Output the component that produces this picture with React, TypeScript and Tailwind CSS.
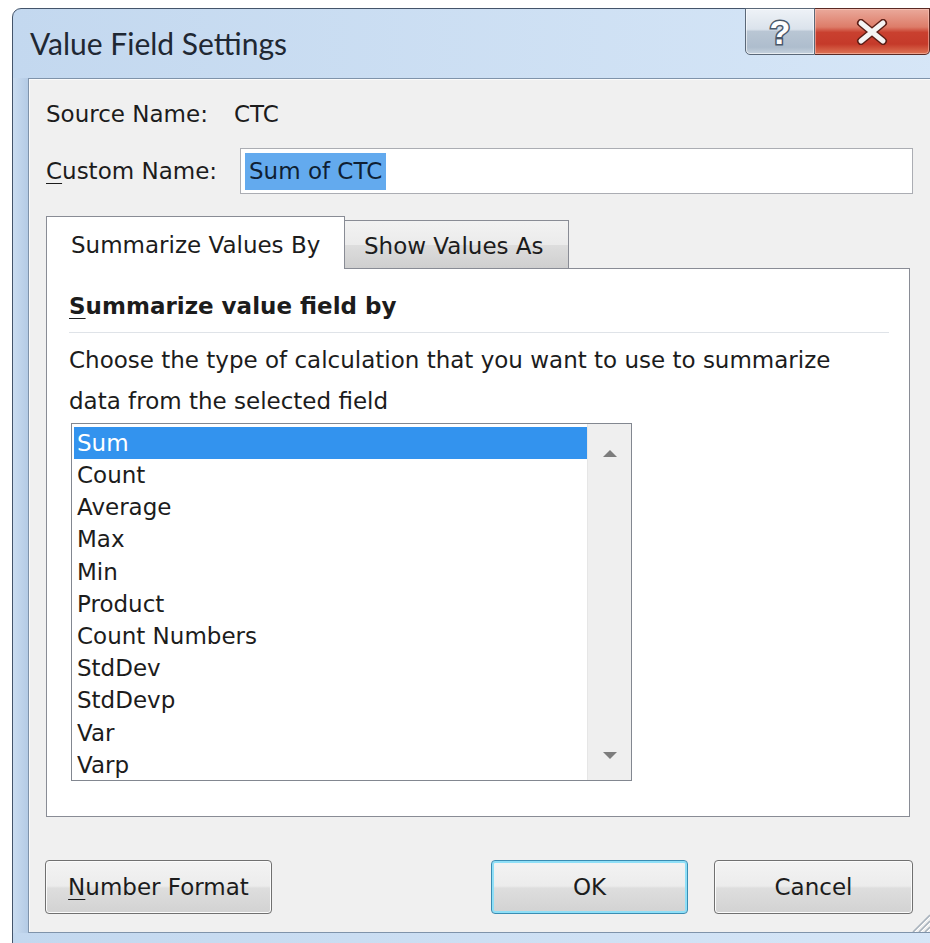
const functions = [
  "Sum",
  "Count",
  "Average",
  "Max",
  "Min",
  "Product",
  "Count Numbers",
  "StdDev",
  "StdDevp",
  "Var",
  "Varp",
];

function HelpButton() {
  return (
    <div className="w-[70px] h-[47px] -mt-px border border-[#5b6878] rounded-bl-[5px] bg-[linear-gradient(to_bottom,#eef2f7_0%,#dbe3ec_45%,#b9c6d4_50%,#aebdcd_85%,#c7d3df_100%)] flex items-center justify-center shadow-[inset_0_0_0_1px_rgba(255,255,255,0.6)]">
      <span className="font-['Liberation_Sans',sans-serif] font-bold text-[34px] leading-none text-white [-webkit-text-stroke:3px_#4a586a] [paint-order:stroke_fill]">
        ?
      </span>
    </div>
  );
}

function CloseButton() {
  return (
    <div className="w-[115px] h-[47px] -mt-px border border-l-0 border-[#5a2a24] rounded-br-[5px] bg-[linear-gradient(to_bottom,#eaa99b_0%,#dd7c69_40%,#c9402f_52%,#c53a2a_78%,#de7556_100%)] flex items-center justify-center shadow-[inset_0_0_0_1px_rgba(255,210,200,0.5)]">
      <svg width="36" height="26" viewBox="0 0 36 26">
        <path d="M7 4 L29 22 M29 4 L7 22" stroke="#5b1e16" strokeWidth="8" strokeLinecap="round" />
        <path d="M7 4 L29 22 M29 4 L7 22" stroke="#f4f4f4" strokeWidth="5" strokeLinecap="round" />
      </svg>
    </div>
  );
}

function PushButton({ children, width, isDefault }: { children: React.ReactNode; width: string; isDefault?: boolean }) {
  return (
    <div
      className={`${width} h-[54px] rounded-[4px] flex items-center justify-center bg-[linear-gradient(to_bottom,#f3f3f3_0%,#ececec_48%,#dedede_52%,#d2d2d2_100%)] ${
        isDefault
          ? "border border-[#3a8db3] shadow-[inset_0_0_0_2px_#8fdff7]"
          : "border border-[#707070] shadow-[inset_0_0_0_1px_#fbfbfb]"
      }`}
    >
      {children}
    </div>
  );
}

function ScrollArrow({ up }: { up?: boolean }) {
  return (
    <svg width="16" height="9" viewBox="0 0 16 9">
      <path d={up ? "M1 8 L8 1 L15 8 Z" : "M1 1 L8 8 L15 1 Z"} fill="#7d7d7d" />
    </svg>
  );
}

export default function App() {
  return (
    <div className="w-[930px] h-[943px] overflow-hidden bg-white font-['DejaVu_Sans',sans-serif] text-[23px] text-[#1c1c1c]">
      <div className="ml-[12px] mt-[8px] w-[935px] h-[960px] rounded-tl-[9px] border border-[#44546a] bg-[linear-gradient(to_right,#c3d8ef,#d6e6f7)] flex flex-col">
        {/* caption */}
        <div className="h-[69px] flex justify-between pl-[17px] pr-[16px]">
          <span className="self-center font-['Lato',sans-serif] text-[30px] text-[#1f2833]">Value Field Settings</span>
          <div className="flex self-start">
            <HelpButton />
            <CloseButton />
          </div>
        </div>

        <div className="flex">
          <div className="w-[15px] bg-[linear-gradient(to_right,#cadcf0,#b4cbe5)]" />
          <div className="relative flex-1 h-[855px] border-t border-l border-b border-[#7f93aa] bg-[#f0f0f0] pt-[19px] pl-[17px] shadow-[inset_1px_1px_0_#fbfbfb]">
            <div className="h-[32px] flex items-center">
              <span className="w-[188px]">Source Name:</span>
              <span>CTC</span>
            </div>

            <div className="mt-[18px] h-[46px] flex items-center">
              <span className="w-[194px]">
                <span className="underline underline-offset-[4px] decoration-1">C</span>ustom Name:
              </span>
              <div className="w-[673px] h-[46px] border border-[#abadb3] bg-white flex items-center pl-[4px]">
                <span className="h-[37px] px-[4px] flex items-center bg-[#63aaee] text-[#0f1f33]">Sum of CTC</span>
              </div>
            </div>

            {/* tabs */}
            <div className="mt-[22px] h-[52px] flex items-end">
              <div className="relative z-10 -mb-px w-[299px] h-[53px] bg-white border-t border-l border-r border-[#898c95] pl-[24px] pt-[5px] flex items-center">
                Summarize Values By
              </div>
              <div className="w-[224px] h-[48px] border-t border-r border-[#898c95] bg-[linear-gradient(to_bottom,#f2f2f2_0%,#ebebeb_50%,#dddddd_52%,#cfcfcf_100%)] pl-[19px] pt-[4px] flex items-center">
                Show Values As
              </div>
            </div>

            <div className="w-[864px] h-[549px] border border-[#898c95] bg-white pl-[22px] pr-[20px] pt-[21px]">
              <div className="h-[32px] flex items-center font-bold">
                <span className="underline underline-offset-[4px] decoration-1">S</span>ummarize value field by
              </div>
              <div className="mt-[10px] h-px bg-[#dfe3e8]" />
              <div className="mt-[7px] leading-[41px]">
                <div>Choose the type of calculation that you want to use to summarize</div>
                <div>data from the selected field</div>
              </div>

              <div className="mt-px ml-[2px] w-[561px] h-[358px] border border-[#828790] bg-white flex">
                <div className="flex-1 pl-[2px] pt-[3px]">
                  {functions.map((name, i) => (
                    <div
                      key={name}
                      className={`h-[32.2px] pl-[3px] flex items-center ${i === 0 ? "bg-[#3393ee] text-white" : ""}`}
                    >
                      {name}
                    </div>
                  ))}
                </div>
                <div className="w-[44px] bg-[#efefef] border-l border-[#e6e6e6] flex flex-col items-center justify-between pt-[25px] pb-[20px]">
                  <ScrollArrow up />
                  <ScrollArrow />
                </div>
              </div>
            </div>

            {/* dialog buttons */}
            <div className="mt-[43px] -ml-px flex">
              <PushButton width="w-[227px]">
                <span>
                  <span className="underline underline-offset-[4px] decoration-1">N</span>umber Format
                </span>
              </PushButton>
              <div className="ml-[219px]">
                <PushButton width="w-[197px]" isDefault>
                  OK
                </PushButton>
              </div>
              <div className="ml-[26px]">
                <PushButton width="w-[199px]">Cancel</PushButton>
              </div>
            </div>

            {/* size grip */}
            <svg className="absolute right-0 bottom-0" width="22" height="20" viewBox="0 0 22 20">
              <path d="M21 3 L4 20 M21 9 L10 20 M21 15 L16 20" stroke="#a9b3bd" strokeWidth="1.6" />
              <path d="M22 4 L5 21 M22 10 L11 21 M22 16 L17 21" stroke="#ffffff" strokeWidth="1" />
            </svg>
          </div>
          <div className="w-[15px] bg-[#d3e3f5]" />
        </div>
      </div>
    </div>
  );
}
